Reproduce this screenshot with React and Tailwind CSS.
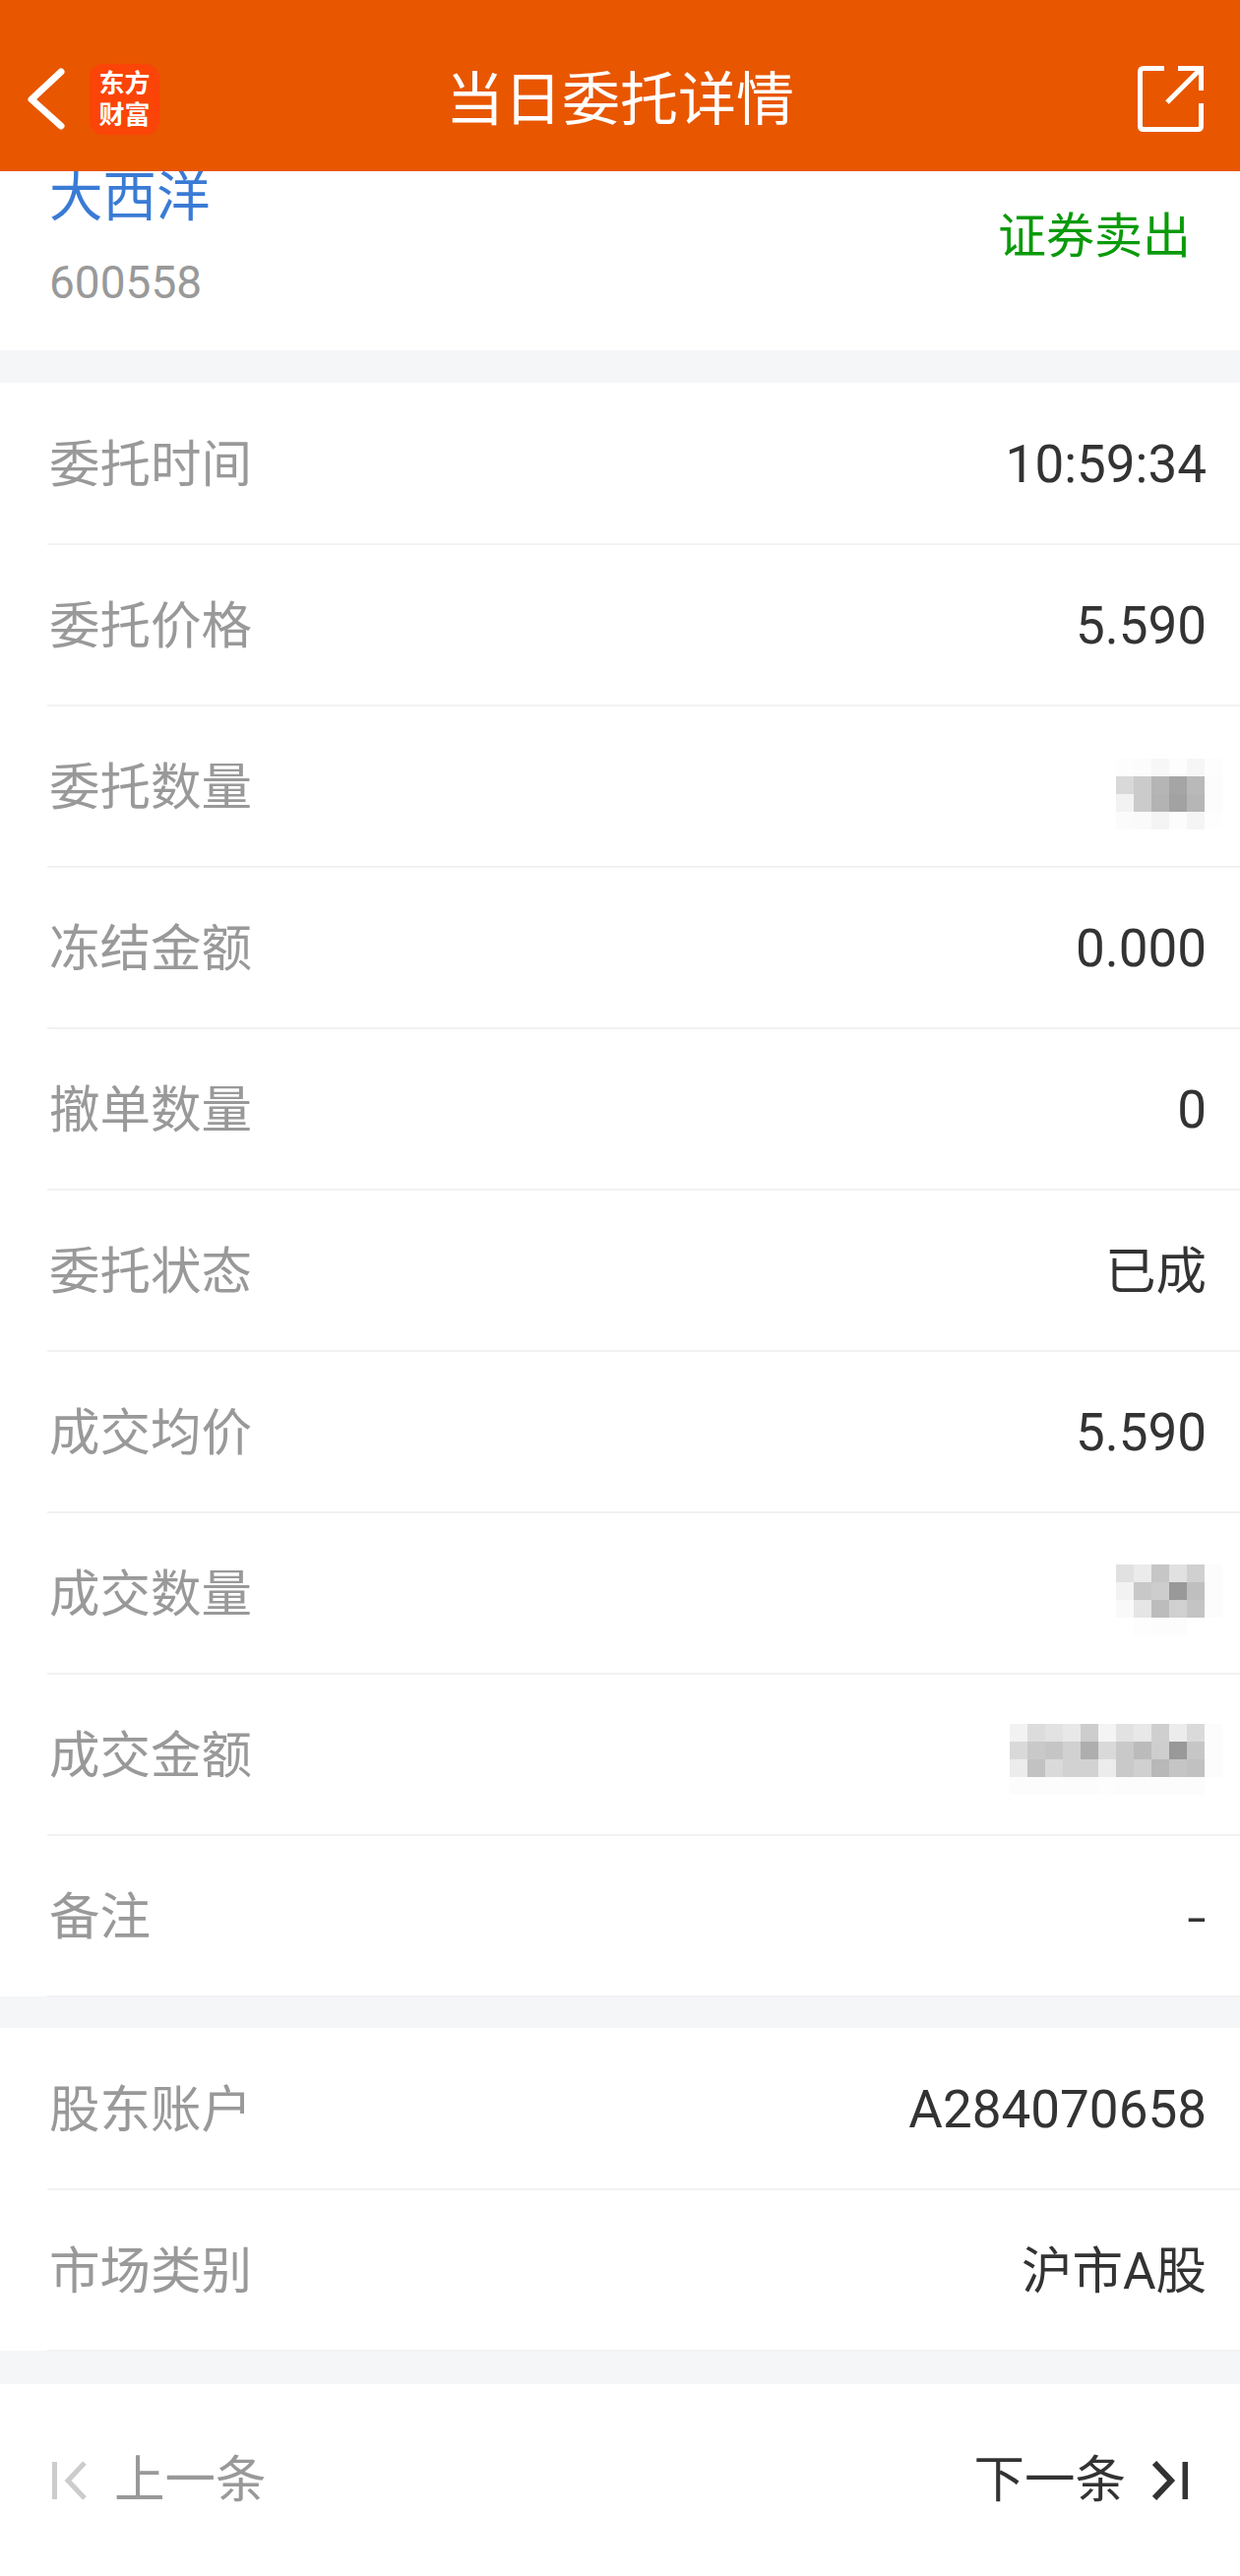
import React from "react";

const mosaicQty = [
  ["#fdfdfd", "#fcfcfc", "#f7f7f7", "#fdfdfd", "#f6f6f6", "#fdfdfd"],
  ["#d9d9d9", "#cbcbcb", "#b5b5b5", "#a5a5a5", "#b9b9b9", "#fcfcfc"],
  ["#f2f2f2", "#cbcbcb", "#b3b3b3", "#a2a2a2", "#b6b6b6", "#fcfcfc"],
  ["#fbfbfb", "#fafafa", "#f4f4f4", "#fcfcfc", "#f5f5f5", "#fefefe"],
];

const mosaicDealQty = [
  ["#e1e1e1", "#ebebeb", "#c6c6c6", "#e1e1e1", "#d0d0d0", "#fcfcfc"],
  ["#f2f2f2", "#c8c8c8", "#cdcdcd", "#999999", "#bfbfbf", "#fcfcfc"],
  ["#f9f9f9", "#e5e5e5", "#bcbcbc", "#d0d0d0", "#c4c4c4", "#fcfcfc"],
  ["#ffffff", "#fdfdfd", "#fcfcfc", "#fcfcfc", "#ffffff", "#ffffff"],
];

const mosaicAmount = [
  ["#f2f2f2", "#dcdcdc", "#e2e2e2", "#e8e8e8", "#cdcdcd", "#f4f4f4", "#e2e2e2", "#e8e8e8", "#cfcfcf", "#ececec", "#dadada", "#fcfcfc"],
  ["#d9d9d9", "#c9c9c9", "#c5c5c5", "#d1d1d1", "#aeaeae", "#d9d9d9", "#c9c9c9", "#bbbbbb", "#cecece", "#999999", "#c6c6c6", "#fcfcfc"],
  ["#ececec", "#c2c2c2", "#dadada", "#d2d2d2", "#d2d2d2", "#ececec", "#c9c9c9", "#d0d0d0", "#b8b8b8", "#c5c5c5", "#c1c1c1", "#fcfcfc"],
  ["#fcfcfc", "#fcfcfc", "#fcfcfc", "#fcfcfc", "#fcfcfc", "#fdfdfd", "#fcfcfc", "#fcfcfc", "#fcfcfc", "#fcfcfc", "#fcfcfc", "#ffffff"],
];

function Mosaic({ cells, className }) {
  return (
    <div className={`-mr-4 flex flex-col ${className}`}>
      {cells.map((row, r) => (
        <div key={r} className="flex">
          {row.map((color, c) => (
            <div key={c} className="h-[18px] w-[18px]" style={{ backgroundColor: color }} />
          ))}
        </div>
      ))}
    </div>
  );
}

function Row({ label, value, children }) {
  return (
    <div className="relative flex h-[164px] items-center justify-between pl-[50px] pr-[34px] pt-[3px]">
      <span className="text-[51.500px] text-[#999999]">{label}</span>
      {children || <span className="text-[53px] text-[#333333]">{value}</span>}
      <div className="absolute bottom-[-1px] left-[48px] right-0 h-[2px] bg-[#f2f2f2]" />
    </div>
  );
}

export default function App() {
  return (
    <div
      className="flex h-[2618px] w-[1260px] flex-col overflow-hidden bg-[#f5f6f8]"
      style={{ fontFamily: 'Roboto, "Noto Sans CJK SC", sans-serif' }}
    >
      <header className="relative z-10 flex h-[174px] shrink-0 items-center justify-center bg-[#e85600]">
        <svg className="absolute left-0 top-0" width="1260" height="174" viewBox="0 0 1260 174" fill="none" stroke="#ffffff">
          <path d="M62 73 L32 101 L62 128" strokeWidth="7" strokeLinecap="round" strokeLinejoin="round" />
          <path
            d="M1183 69.5 H1162 Q1158.500 69.500 1158.500 73 V128 Q1158.500 131.500 1162 131.500 H1217 Q1220.500 131.500 1220.500 128 V105"
            strokeWidth="5"
          />
          <path d="M1186 104 L1220 70 M1197 69.500 H1220.500 V92" strokeWidth="5" />
        </svg>
        <div className="absolute left-[91px] top-[65px] flex h-[72px] w-[71px] flex-col items-center justify-center rounded-[14px] bg-[#fb4408] text-[26px] font-bold leading-[32px] text-white">
          <span>东方</span>
          <span>财富</span>
        </div>
        <h1 className="mt-[30px] text-[59px] font-normal text-white">当日委托详情</h1>
      </header>

      <section className="flex h-[182px] shrink-0 items-start justify-between bg-white pl-[50px] pr-[50px]">
        <div className="flex flex-col">
          <span className="mt-[-4px] text-[54.500px] leading-[60px] text-[#3a7bd5]">大西洋</span>
          <span className="mt-[34px] text-[46px] leading-[46px] text-[#999999]">600558</span>
        </div>
        <span className="mt-[39px] text-[49px] leading-[56px] text-[#0a9a0a]">证券卖出</span>
      </section>

      <section className="mt-[33px] shrink-0 bg-white">
        <Row label="委托时间" value="10:59:34" />
        <Row label="委托价格" value="5.590" />
        <Row label="委托数量">
          <Mosaic cells={mosaicQty} className="mt-[13px]" />
        </Row>
        <Row label="冻结金额" value="0.000" />
        <Row label="撤单数量" value="0" />
        <Row label="委托状态">
          <span className="text-[51.500px] text-[#333333]">已成</span>
        </Row>
        <Row label="成交均价" value="5.590" />
        <Row label="成交数量">
          <Mosaic cells={mosaicDealQty} className="mt-[11px]" />
        </Row>
        <Row label="成交金额">
          <Mosaic cells={mosaicAmount} className="mt-[7px]" />
        </Row>
        <Row label="备注">
          <span className="text-[70px] font-light leading-none text-[#333333]">-</span>
        </Row>
      </section>

      <section className="mt-[32px] shrink-0 bg-white">
        <Row label="股东账户" value="A284070658" />
        <Row label="市场类别">
          <span className="text-[51.500px] text-[#333333]">沪市A股</span>
        </Row>
      </section>

      <footer className="mt-[34px] flex flex-1 items-center justify-between bg-white pl-[53px] pr-[53px]">
        <div className="flex items-center">
          <svg width="36" height="40" viewBox="0 0 36 40" fill="none" stroke="#cccccc" strokeWidth="5">
            <path d="M2.500 1 V39" />
            <path d="M33 2 L16 20 L33 38" />
          </svg>
          <span className="ml-[27px] text-[51.500px] text-[#999999]">上一条</span>
        </div>
        <div className="flex items-center">
          <span className="mr-[27px] text-[51.500px] text-[#333333]">下一条</span>
          <svg width="36" height="40" viewBox="0 0 36 40" fill="none" stroke="#333333" strokeWidth="6">
            <path d="M2 2 L19 20 L2 38" />
            <path d="M33.500 1 V39" />
          </svg>
        </div>
      </footer>
    </div>
  );
}
